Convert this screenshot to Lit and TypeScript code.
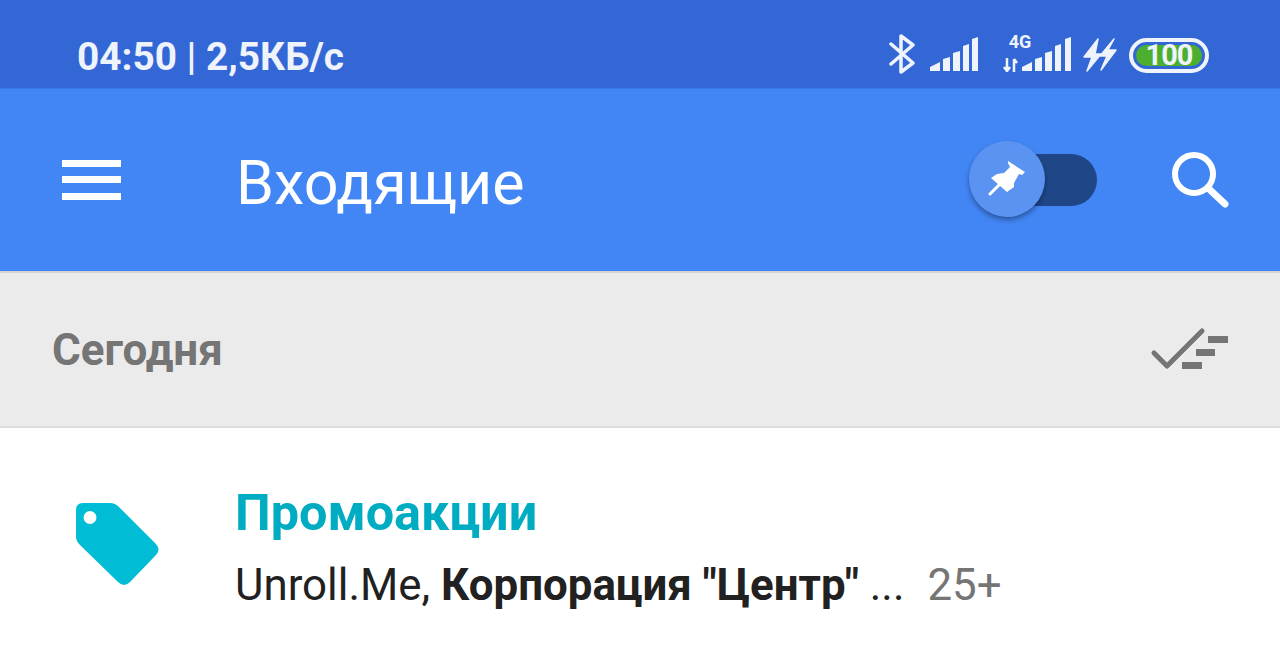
import { LitElement, html, css, svg } from "lit";
import { customElement } from "lit/decorators.js";

const ICON = "#eef3fc";

// five step signal meter, first step is a wedge, tops lean up to the right
const signal = (width: number, bars: number[][]) => html`
    <svg width=${width} height="36" viewBox="0 0 ${width} 36">
        <path d="M0 35 V31 L10 26 V35 Z" fill=${ICON}></path>
        ${bars.map(([x, w, top]) => svg`<path d="M${x} 35 V${top + 2} L${x + w} ${top} V35 Z" fill=${ICON}></path>`)}
    </svg>
`;

@customElement("app-root")
class AppRoot extends LitElement {
    render() {
        return html`
            <div class="status">
                <span class="time">04:50 | 2,5КБ/с</span>
                <div class="status-icons">
                    <svg class="bt" width="28" height="40" viewBox="0 0 28 40">
                        <path d="M3 10 L25 29 L13 38 V2 L25 11 L3 30" fill="none" stroke=${ICON} stroke-width="3.5" stroke-linejoin="round" stroke-linecap="round"></path>
                    </svg>
                    <div class="sig1">
                        ${signal(49, [[13, 7, 21], [23, 7, 15], [33, 6, 8], [42, 6, 1]])}
                    </div>
                    <div class="net">
                        <span class="g4">4G</span>
                        <svg class="arrows" width="16" height="14" viewBox="0 0 16 14">
                            <path d="M4 0 V13 M1 9 L4 13 L7 9 M11 14 V1 M11 1 L14 5" fill="none" stroke=${ICON} stroke-width="2.5"></path>
                        </svg>
                    </div>
                    <div class="sig2">
                        ${signal(49, [[13, 7, 21], [23, 7, 15], [33, 6, 8], [43, 6, 1]])}
                    </div>
                    <svg class="charge" width="34" height="36" viewBox="0 0 34 36">
                        <path d="M15 3 L1 21 H9 L4 35 L18 18 H12 Z M31 3 L17 20 H24 L18 34 L33 14 H25 Z" fill=${ICON} stroke=${ICON} stroke-width="1.5" stroke-linejoin="round"></path>
                    </svg>
                    <div class="battery"><span class="level">100</span></div>
                </div>
            </div>
            <div class="toolbar">
                <svg class="menu" width="59" height="40" viewBox="0 0 59 40">
                    <rect x="0" y="0" width="59" height="7" fill="#fff"></rect>
                    <rect x="0" y="16" width="59" height="7" fill="#fff"></rect>
                    <rect x="0" y="33" width="59" height="7" fill="#fff"></rect>
                </svg>
                <span class="title">Входящие</span>
                <div class="toggle">
                    <div class="knob">
                        <svg width="38" height="38" viewBox="0 0 38 38">
                            <path d="M20 1 L37 12 L34 15 L31 14 L26 23 L26 27 L19 32 L3 18 L9 14 L16 13 L22 7 L20 3 Z" fill="#fff"></path>
                            <path d="M11 25 L2 34" stroke="#fff" stroke-width="3" stroke-linecap="round"></path>
                        </svg>
                    </div>
                </div>
                <svg class="search" width="60" height="60" viewBox="0 0 60 60">
                    <circle cx="24" cy="24" r="19" fill="none" stroke="#fff" stroke-width="6"></circle>
                    <path d="M38 38 L55 54" stroke="#fff" stroke-width="7" stroke-linecap="round"></path>
                </svg>
            </div>
            <div class="section">
                <span class="today">Сегодня</span>
                <svg width="80" height="46" viewBox="0 0 80 46">
                    <path d="M4 26 L17 39 L52 4" fill="none" stroke="#757575" stroke-width="5" stroke-linecap="round" stroke-linejoin="round"></path>
                    <rect x="58" y="9" width="20" height="7" fill="#757575"></rect>
                    <rect x="46" y="22" width="19" height="7" fill="#757575"></rect>
                    <rect x="32" y="35" width="20" height="7" fill="#757575"></rect>
                </svg>
            </div>
            <div class="row">
                <svg class="tag" width="84" height="84" viewBox="0 0 84 84">
                    <path fill-rule="evenodd" d="M7 0 H34 Q39 0 43 4 L80 41 Q85 47 80 52 L54 79 Q48 85 42 79 L4 42 Q0 38 0 34 V7 Q0 0 7 0 Z M14 8 A6.5 6.5 0 1 0 14 21 A6.5 6.5 0 1 0 14 8 Z" fill="#00bcd4"></path>
                </svg>
                <div class="row-text">
                    <div class="promo">Промоакции</div>
                    <div class="senders">
                        <span>Unroll.Me, <b>Корпорация "Центр"</b> ...</span>
                        <span class="count">25+</span>
                    </div>
                </div>
            </div>
        `;
    }

    static styles = css`
        :host {
            display: block;
            width: 1280px;
            height: 649px;
            overflow: hidden;
            background: #fff;
            font-family: Roboto, "Noto Sans", sans-serif;
        }
        .status {
            height: 89px;
            box-sizing: border-box;
            display: flex;
            align-items: center;
            justify-content: space-between;
            padding: 20px 71px 0 78px;
            background: #3367d6;
            color: #eef3fc;
            border-bottom: 1px solid #3d78ea;
        }
        .time {
            font-size: 38.8px;
            font-weight: 700;
            margin-top: 5px;
            margin-left: -1px;
        }
        .status-icons {
            display: flex;
            align-items: center;
        }
        .bt {
            margin-right: 14px;
        }
        .sig1 {
            height: 36px;
            margin-right: 21px;
        }
        .net {
            width: 30px;
            display: flex;
            flex-direction: column;
            align-items: center;
            height: 36px;
            justify-content: space-between;
        }
        .g4 {
            font-size: 18px;
            font-weight: 700;
            line-height: 16px;
            margin-left: 10px;
            margin-top: -2px;
        }
        .arrows {
            margin-right: 9px;
        }
        .sig2 {
            height: 36px;
            margin-left: -8px;
            margin-right: 12px;
        }
        .charge {
            margin-right: 12px;
        }
        .battery {
            width: 80px;
            height: 35px;
            margin-top: 2px;
            box-sizing: border-box;
            border: 4px solid #eef3fc;
            border-radius: 18px;
            padding: 3px;
            display: flex;
        }
        .level {
            flex: 1;
            border-radius: 12px;
            background: #4caf2f;
            font-size: 29px;
            font-weight: 700;
            line-height: 21px;
            text-align: center;
            letter-spacing: -1px;
        }
        .toolbar {
            height: 182px;
            background: #4285f4;
            display: flex;
            align-items: center;
            padding: 0 50px 0 62px;
            color: #fff;
            border-bottom: 2px solid #d4d4d4;
        }
        .menu {
            flex: none;
        }
        .title {
            font-size: 61px;
            margin: 6px 0 0 115px;
            flex: 1;
        }
        .toggle {
            width: 98px;
            height: 52px;
            margin-right: 73px;
            border-radius: 26px;
            background: #1f4788;
            position: relative;
        }
        .knob {
            position: absolute;
            left: -30px;
            top: -13px;
            width: 76px;
            height: 76px;
            border-radius: 50%;
            background: #5b93f3;
            box-shadow: 0 3px 5px rgba(0, 0, 0, 0.35);
            display: flex;
            align-items: center;
            justify-content: center;
        }
        .search {
            flex: none;
        }
        .section {
            height: 155px;
            box-sizing: border-box;
            background: #ebebeb;
            border-bottom: 2px solid #dcdcdc;
            display: flex;
            align-items: center;
            justify-content: space-between;
            padding: 0 50px 0 52px;
        }
        .today {
            font-size: 44px;
            font-weight: 700;
            color: #757575;
        }
        .row {
            display: flex;
            align-items: flex-start;
            padding: 58px 0 0 76px;
        }
        .tag {
            flex: none;
            margin-top: 17px;
        }
        .row-text {
            margin-left: 75px;
        }
        .promo {
            font-size: 50.4px;
            font-weight: 700;
            line-height: 54px;
            color: #00acc1;
        }
        .senders {
            font-size: 43.85px;
            line-height: 52px;
            color: #212121;
            margin-top: 19px;
            display: flex;
        }
        .senders b {
            font-weight: 700;
        }
        .count {
            color: #757575;
            margin-left: 23px;
        }
    `;
}
